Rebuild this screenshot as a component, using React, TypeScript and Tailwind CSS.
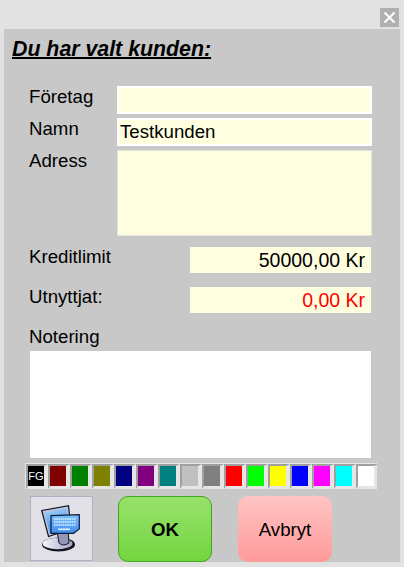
const swatches = [
  "#000000", "#800000", "#008000", "#808000", "#000080", "#800080", "#008080", "#c0c0c0",
  "#808080", "#ff0000", "#00ff00", "#ffff00", "#0000ff", "#ff00ff", "#00ffff", "#ffffff",
];

function ComputerIcon() {
  return (
    <svg width="42" height="48" viewBox="0 0 42 48">
      <defs>
        <linearGradient id="screen" x1="0" y1="0" x2="0.3" y2="1">
          <stop offset="0" stopColor="#a4d2fa" />
          <stop offset="1" stopColor="#3c8cec" />
        </linearGradient>
        <linearGradient id="keys" x1="0" y1="0" x2="0" y2="1">
          <stop offset="0" stopColor="#7cc4fd" />
          <stop offset="1" stopColor="#3d8df0" />
        </linearGradient>
        <linearGradient id="base" x1="0" y1="0" x2="1" y2="0">
          <stop offset="0" stopColor="#f4f4fc" />
          <stop offset="1" stopColor="#a4a6c8" />
        </linearGradient>
      </defs>
      <ellipse cx="17.5" cy="39.5" rx="16.5" ry="7" fill="#14141c" />
      <ellipse cx="16.5" cy="38.5" rx="15" ry="5.8" fill="url(#base)" />
      <path d="M16 26 L27 24 L28 38 Q22 42 18 38 Z" fill="#9497b8" stroke="#14141c" strokeWidth="1" />
      <path d="M0.7 5.5 L27.5 0.7 L30 24 L7.5 31.5 Z" fill="#b4c0e4" stroke="#14141c" strokeWidth="1.2" />
      <path d="M3.5 8 L25.5 4 L27.5 22.5 L9 28.5 Z" fill="url(#screen)" />
      <path d="M10 10.7 L38.3 9.7 L38.3 24 L32.5 28.3 L10 28.3 Z" fill="url(#keys)" stroke="#101c3a" strokeWidth="1.2" />
      <g stroke="#dcefff" strokeWidth="1.6" strokeDasharray="1.6 0.6">
        <line x1="13" y1="14" x2="35" y2="14" />
        <line x1="13" y1="17" x2="35" y2="17" />
        <line x1="13" y1="20" x2="35" y2="20" />
      </g>
      <rect x="17" y="23.5" width="12" height="1.6" fill="#e4f2ff" />
    </svg>
  );
}

function Field({ label, className, children }: { label: string; className: string; children?: string }) {
  return (
    <div className="flex items-start">
      <span className="w-[88px] shrink-0 text-[18.67px] leading-[21px]">{label}</span>
      <div className={`w-[255px] bg-[#ffffe0] px-[1px] text-[18.67px] leading-[24px] ${className}`}>
        {children}
      </div>
    </div>
  );
}

function AmountRow({ label, value, red }: { label: string; value: string; red?: boolean }) {
  return (
    <div className="flex items-start justify-between">
      <span className="text-[18.67px] leading-[19px]">{label}</span>
      <div
        className={`mr-[1px] h-[26px] w-[181px] bg-[#ffffe0] pr-[6px] text-right text-[19.5px] leading-[26px] ${
          red ? "text-[#ff0000]" : "text-black"
        }`}
      >
        {value}
      </div>
    </div>
  );
}

export default function App() {
  return (
    <div className="flex h-[567px] w-[404px] flex-col overflow-hidden bg-[#e2e2e2] font-['Liberation_Sans',Arial,sans-serif] text-black">
      <div className="flex h-[29px] shrink-0 items-end justify-end pb-[2px] pr-[5px]">
        <button type="button" aria-label="Stäng" className="flex h-[19px] w-[19px] items-center justify-center bg-[#b0b0b0]">
          <svg width="13" height="13" viewBox="0 0 13 13">
            <path d="M1.5 1.5 L11.5 11.5 M11.5 1.5 L1.5 11.5" stroke="#ffffff" strokeWidth="2" />
          </svg>
        </button>
      </div>

      <div className="mx-[4px] flex h-[533px] flex-col bg-[#c8c8c8]">
        <h1 className="ml-[8px] mt-[8px] w-fit text-[21.33px] font-bold italic leading-[25px] underline decoration-2">
          Du har valt kunden:
        </h1>

        <div className="ml-[25px] mt-[24px] flex w-[343px] flex-col gap-[4px]">
          <Field label="Företag" className="h-[28px] border-2 border-white" />
          <Field label="Namn" className="h-[28px] border-2 border-white">Testkunden</Field>
          <Field label="Adress" className="h-[86px] border border-[#e4e4d8]" />
        </div>

        <div className="ml-[25px] mt-[11px] flex w-[343px] flex-col gap-[14px]">
          <AmountRow label="Kreditlimit" value="50000,00 Kr" />
          <AmountRow label="Utnyttjat:" value="0,00 Kr" red />
        </div>

        <div className="ml-[25px] mt-[13px] text-[18.67px] leading-[21px]">Notering</div>
        <div className="ml-[26px] mt-[4px] h-[107px] w-[341px] bg-white" />

        <div className="ml-[21px] mt-[5px] flex h-[26px] w-[352px] overflow-hidden bg-[#e6e6e6] pl-[1px] pt-[1px]">
          {swatches.map((color, i) => (
            <div
              key={color}
              className="h-[25px] w-[22px] shrink-0 border-b-[3px] border-l-2 border-r-4 border-t-2 border-b-[#e6e6e6] border-l-[#a0a0a0] border-r-[#e6e6e6] border-t-[#a0a0a0] text-center text-[11px] leading-[20px] text-white"
              style={{ backgroundColor: color }}
            >
              {i === 0 ? "FG" : null}
            </div>
          ))}
        </div>

        <div className="ml-[26px] mt-[7px] flex items-start">
          <div className="flex h-[65px] w-[63px] items-center justify-center border border-[#b0b0c4] bg-[#e0e0e6]">
            <ComputerIcon />
          </div>
          <button
            type="button"
            className="ml-[25px] h-[66px] w-[94px] rounded-[10px] border border-[#3ea81e] bg-gradient-to-b from-[#98e16b] to-[#73d63e] pt-[2px] text-[18.67px] font-bold"
          >
            OK
          </button>
          <button
            type="button"
            className="ml-[26px] h-[66px] w-[94px] rounded-[10px] bg-gradient-to-b from-[#ffc4c4] to-[#ff9a9a] pt-[2px] text-[18.67px]"
          >
            Avbryt
          </button>
        </div>
      </div>
    </div>
  );
}
